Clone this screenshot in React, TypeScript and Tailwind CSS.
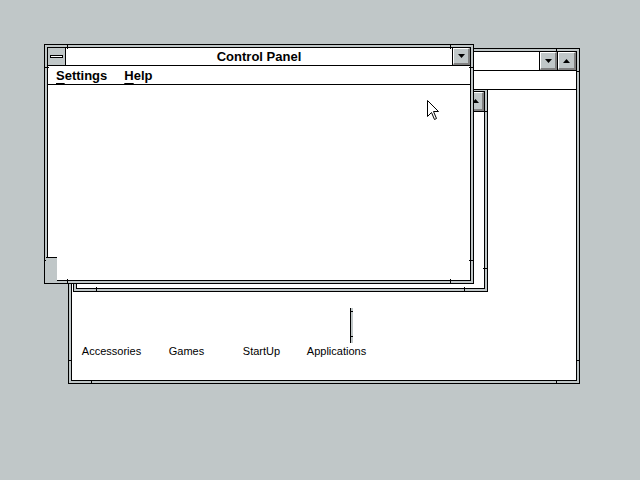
const FONT = "font-['Liberation_Sans',Arial,sans-serif]";

function Tri({ up }: { up?: boolean }) {
  return (
    <svg width="7" height="4" viewBox="0 0 7 4" className="block">
      {up ? <path d="M3.5 0 L7 4 L0 4 Z" fill="#000" /> : <path d="M0 0 L7 0 L3.5 4 Z" fill="#000" />}
    </svg>
  );
}

function Btn({ up, w = "w-[18px]" }: { up?: boolean; w?: string }) {
  return (
    <div className={`${w} h-full border-l border-black shrink-0`}>
      <div className="h-full w-full bg-[#c0c7c8] border-t-[1px] border-l-[1px] border-white border-b-2 border-r-2 border-b-[#808080] border-r-[#808080] flex items-center justify-center">
        <Tri up={up} />
      </div>
    </div>
  );
}

// little sizing-border notches, 22px in from each corner
function Ticks() {
  return (
    <>
      <div className="absolute top-0 left-[22px] w-px h-[4px] bg-black" />
      <div className="absolute top-0 right-[22px] w-px h-[4px] bg-black" />
      <div className="absolute bottom-0 left-[22px] w-px h-[4px] bg-black" />
      <div className="absolute bottom-0 right-[22px] w-px h-[4px] bg-black" />
      <div className="absolute left-0 top-[22px] w-[4px] h-px bg-black" />
      <div className="absolute left-0 bottom-[22px] w-[4px] h-px bg-black" />
      <div className="absolute right-0 top-[22px] w-[4px] h-px bg-black" />
      <div className="absolute right-0 bottom-[22px] w-[4px] h-px bg-black" />
    </>
  );
}

function Cursor() {
  return (
    <svg width="13" height="21" viewBox="0 0 13 21" className="absolute left-[427px] top-[100px]">
      <path d="M0.5 0.5 L0.5 16.5 L4.5 12.5 L7.5 19.5 L9.5 18.5 L6.5 11.5 L11.5 11.5 Z" fill="#fff" stroke="#000" strokeWidth="1" />
    </svg>
  );
}

export default function App() {
  return (
    <div className={`relative w-[640px] h-[480px] bg-[#c0c7c8] overflow-hidden ${FONT}`}>
      {/* PROGRAM MANAGER (back) */}
      <div className="absolute left-[68px] top-[48px] w-[512px] h-[336px] border border-black bg-[#c0c7c8] p-[2px]">
        <Ticks />
        <div className="relative h-full border border-black bg-white flex flex-col">
          <div className="h-[19px] border-b border-black flex shrink-0">
            <div className="flex-1" />
            <Btn />
            <Btn up w="w-[19px]" />
          </div>
          <div className="h-[19px] border-b border-black shrink-0" />
          <div className="relative flex-1 overflow-hidden">
            {/* group window */}
            <div className="absolute left-[1px] top-[-2px] w-[415px] h-[204px] border border-black bg-[#c0c7c8] p-[2px]">
              <Ticks />
              <div className="h-full border border-black bg-white flex flex-col">
                <div className="h-[20px] border-b border-black flex shrink-0">
                  <div className="flex-1" />
                  <Btn up />
                </div>
              </div>
            </div>

            <div className="absolute left-[278px] top-[218px] w-[3px] h-[35px] border-l border-black bg-[#c0c7c8]">
              <div className="absolute right-0 top-[3px] w-[2px] h-px bg-black" />
              <div className="absolute right-0 bottom-[6px] w-[2px] h-px bg-black" />
            </div>

            <div className="absolute left-[2px] top-[255px] flex text-[11px] leading-[13px] text-black">
              {["Accessories", "Games", "StartUp", "Applications"].map((n) => (
                <div key={n} className="w-[75px] flex justify-center whitespace-nowrap">
                  {n}
                </div>
              ))}
            </div>
          </div>
        </div>
      </div>

      {/* CONTROL PANEL (front) */}
      <div className="absolute left-[44px] top-[44px] w-[430px] h-[240px] border border-black bg-[#c0c7c8] p-[2px]">
        <Ticks />
        <div className="h-full border border-black bg-white flex flex-col">
          <div className="h-[18px] border-b border-black flex shrink-0">
            <div className="w-[18px] h-full border-r border-black bg-[#c0c7c8] flex items-center justify-center shrink-0">
              <div className="w-[13px] h-[3px] border border-black bg-white" />
            </div>
            <div className="flex-1 flex items-center justify-center pt-px text-[13px] font-bold text-black">
              Control Panel
            </div>
            <Btn />
          </div>
          <div className="h-[19px] border-b border-black flex items-center gap-[17px] pl-2 pt-[2px] text-[13px] font-bold text-black shrink-0">
            <span>
              <span className="underline underline-offset-[3px]">S</span>ettings
            </span>
            <span>
              <span className="underline underline-offset-[3px]">H</span>elp
            </span>
          </div>
          <div className="flex-1" />
        </div>
        <div className="absolute left-px top-[212px] w-[11px] h-[24px] border-t border-black bg-[#c0c7c8]" />
      </div>

      <Cursor />
    </div>
  );
}
